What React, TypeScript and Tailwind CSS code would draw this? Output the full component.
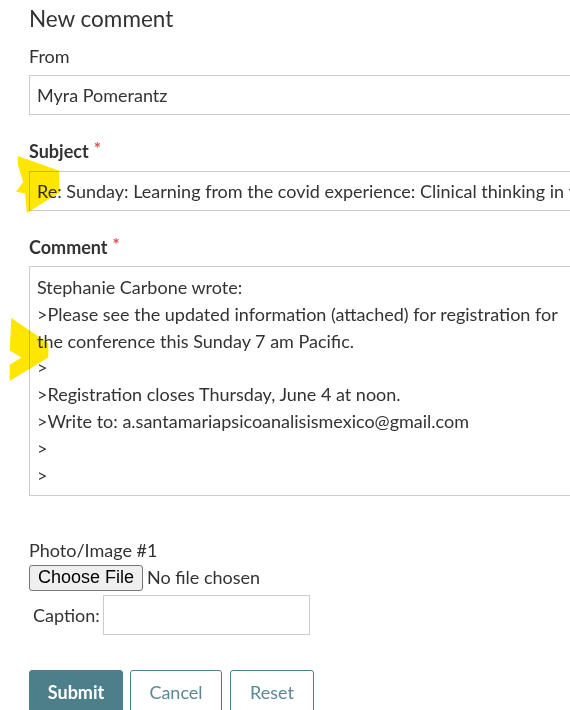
import React from 'react';

const lato = { fontFamily: 'Lato, "Open Sans", sans-serif' };

function Required() {
  return <span className="relative top-[1px] ml-[5px] text-[17px] leading-none text-[#d9534f]">*</span>;
}

function Highlight({ points, className }: { points: string; className: string }) {
  return (
    <svg className={`pointer-events-none absolute mix-blend-multiply ${className}`} viewBox="0 0 50 70" preserveAspectRatio="none">
      <polygon points={points} fill="#ffe600" />
    </svg>
  );
}

const quoted = [
  'Stephanie Carbone wrote:',
  '>Please see the updated information (attached) for registration for',
  'the conference this Sunday 7 am Pacific.',
  '>',
  '>Registration closes Thursday, June 4 at noon.',
  '>Write to: a.santamariapsicoanalisismexico@gmail.com',
  '>',
  '>',
];

export default function App() {
  return (
    <div className="relative h-[710px] w-[570px] overflow-hidden bg-white text-[#333]" style={lato}>
      <div className="pl-[29px] pt-[4px]">
        <h2 className="text-[22.5px] leading-[30px] text-[#333]">New comment</h2>

        {/* From */}
        <div className="mt-[11px] text-[18px] leading-[22px]">From</div>
        <div className="mt-[8px] flex h-[40px] w-[600px] items-center border border-[#ccc] px-[7px] text-[18px]">
          Myra Pomerantz
        </div>

        {/* Subject */}
        <div className="mt-[24px] flex items-start text-[18px] font-bold leading-[24px]">
          Subject
          <Required />
        </div>
        <div className="mt-[8px] flex h-[40px] w-[600px] items-center overflow-hidden whitespace-nowrap border border-[#ccc] px-[7px] text-[18px]">
          Re: Sunday: Learning from the covid experience: Clinical thinking in the time
        </div>

        {/* Comment */}
        <div className="mt-[24px] flex items-start text-[18px] font-bold leading-[24px]">
          Comment
          <Required />
        </div>
        <div className="mt-[7px] h-[230px] w-[600px] overflow-hidden border border-[#ccc] px-[7px] pt-[7px] text-[18px] leading-[26.8px]">
          {quoted.map((line, i) => (
            <div key={i} className="whitespace-nowrap">
              {line}
            </div>
          ))}
        </div>

        {/* Photo */}
        <div className="mt-[43px] text-[18px] leading-[22px]">Photo/Image #1</div>
        <div className="mt-[3px] flex items-center">
          <span
            className="flex h-[26px] w-[114px] items-center justify-center rounded-[3px] border border-[#767676] bg-[#efefef] text-[18px] text-black"
            style={{ fontFamily: '"Liberation Sans", Arial, sans-serif' }}
          >
            Choose File
          </span>
          <span className="ml-[4px] text-[18px]">No file chosen</span>
        </div>
        <div className="mt-[4px] flex items-center">
          <span className="ml-[4px] text-[18px]">Caption:</span>
          <div className="ml-[3px] h-[40px] w-[207px] border border-[#ccc]" />
        </div>

        {/* Actions */}
        <div className="mt-[35px] flex">
          <button className="h-[44px] w-[94px] rounded-[3px] border border-[#4d7f8b] bg-[#4d7f8b] text-[18px] font-bold text-white">
            Submit
          </button>
          <button className="ml-[7px] h-[44px] w-[92px] rounded-[3px] border border-[#4d7f8b] bg-white text-[18px] text-[#5a8896]">
            Cancel
          </button>
          <button className="ml-[8px] h-[44px] w-[84px] rounded-[3px] border border-[#4d7f8b] bg-white text-[18px] text-[#5a8896]">
            Reset
          </button>
        </div>
      </div>

      <Highlight className="left-[16px] top-[156px] h-[57px] w-[45px]" points="2,0 48,18 48,45 12,70 10,46 0,44 8,32 2,10" />
      <Highlight className="left-[8px] top-[318px] h-[63px] w-[42px]" points="4,0 48,28 48,44 2,70 2,52 16,44 2,36" />
    </div>
  );
}
